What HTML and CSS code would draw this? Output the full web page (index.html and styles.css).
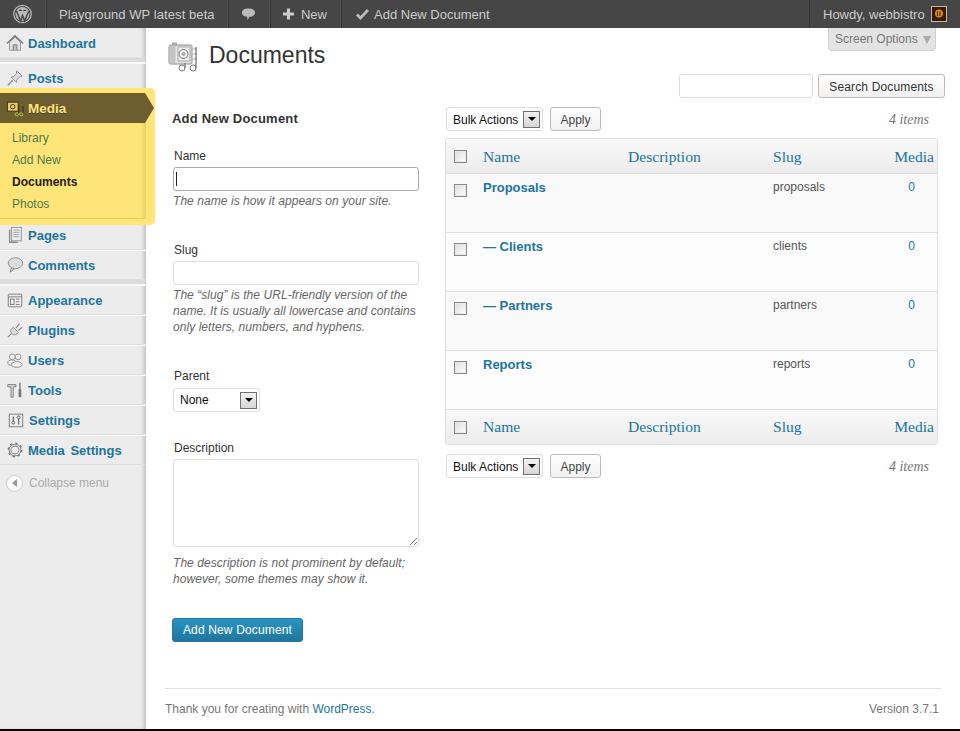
FILE: index.html
```html
<!DOCTYPE html>
<html lang="en">
<head>
  <meta charset="UTF-8">
  <title>Documents</title>
  <link rel="stylesheet" href="styles.css">
</head>
<body>
  <header class="adminbar">
    <div class="bar-item bar-wp">
      <svg width="20" height="20" viewBox="0 0 20 20"><circle cx="10" cy="10" r="9.2" fill="none" stroke="#bbb" stroke-width="1.3"/><circle cx="10" cy="10" r="7.4" fill="#bbb"/><path d="M3.5 6.5 L8 17.5 L10 11.5 L12.3 17.5 L16.5 7 M6 6.2 H9.5 M10.8 6.2 H14" fill="none" stroke="#464646" stroke-width="1.5"/></svg>
    </div>
    <div class="bar-item bar-site">Playground WP latest beta</div>
    <div class="bar-item bar-comments">
      <svg width="16" height="16" viewBox="0 0 16 16"><path d="M1 6.5 C1 3.5 4 2 8 2 C12 2 15 3.5 15 6.5 C15 9.5 12 11 9 11 L7 14.5 L6.5 11 C3.5 10.8 1 9.5 1 6.5 Z" fill="#bbb"/></svg>
    </div>
    <div class="bar-item bar-new">
      <svg width="12" height="12" viewBox="0 0 12 12"><path d="M6 0V12M0 6H12" stroke="#ccc" stroke-width="3.4"/></svg>
      New
    </div>
    <div class="bar-item bar-add">
      <svg width="13" height="12" viewBox="0 0 13 12"><path d="M1 6.5 L4.5 10 L12 2" fill="none" stroke="#bbb" stroke-width="2.8"/></svg>
      Add New Document
    </div>
    <div class="bar-item bar-user">Howdy, webbistro <span class="avatar"><svg width="14" height="14" viewBox="0 0 14 14"><rect width="14" height="14" fill="#3a1a02"/><circle cx="7" cy="6.500" r="4" fill="#d98a12"/><path d="M5.500 4.500V9M8 4.500V9" stroke="#3a1a02"/></svg></span></div>
  </header>

  <div class="page">
    <nav class="sidebar">
      <a class="menu-item first"><svg class="ico" viewBox="0 0 20 20"><path d="M4 9 V18 H16 V9 L10 3.500 Z" fill="#e4e4e4" stroke="#8a8a8a"/><path d="M1 10.500 L10 2 L19 10.500" fill="none" stroke="#777" stroke-width="1.500"/><path d="M8 18 V12 H12 V18" fill="#bbb" stroke="#777"/></svg>Dashboard</a>
      <div class="menu-sep"></div>
      <a class="menu-item"><svg class="ico" viewBox="0 0 20 20"><path d="M12 2 L18 8 L15.500 8.500 L12 12 L11.500 15 L5.500 9 L8.500 8.500 L11.500 5 Z" fill="#ddd" stroke="#8a8a8a"/><path d="M7.500 12.500 L2 18" stroke="#8a8a8a" stroke-width="1.400"/></svg>Posts</a>
      <div class="media-block">
        <a class="menu-item media-current"><svg class="ico" viewBox="0 0 20 20"><rect x="1.500" y="3.500" width="12" height="10" fill="#e8c970" stroke="#332a0c"/><circle cx="7.500" cy="8.500" r="2.500" fill="none" stroke="#332a0c"/><circle cx="12" cy="17" r="1.800" fill="none" stroke="#b9d14a"/><circle cx="17" cy="17" r="1.800" fill="none" stroke="#b9d14a"/><path d="M14 16V8M19 16V8" stroke="#332a0c"/></svg>Media</a>
        <ul class="submenu">
          <li>Library</li>
          <li>Add New</li>
          <li class="current">Documents</li>
          <li>Photos</li>
        </ul>
      </div>
      <a class="menu-item"><svg class="ico" viewBox="0 0 20 20"><rect x="6" y="1.500" width="11" height="15" fill="#eee" stroke="#8a8a8a"/><path d="M8 4.500H15M8 7H15M8 9.500H15M8 12H15" stroke="#999"/><path d="M4 4V18H13" fill="none" stroke="#8a8a8a" stroke-width="1.500"/></svg>Pages</a>
      <a class="menu-item"><svg class="ico" viewBox="0 0 20 20"><path d="M6 13 L4.500 18 L10 14" fill="#ccc" stroke="#8a8a8a"/><ellipse cx="10.500" cy="8" rx="8" ry="6" fill="#ddd" stroke="#8a8a8a"/></svg>Comments</a>
      <div class="menu-sep"></div>
      <a class="menu-item"><svg class="ico" viewBox="0 0 20 20"><rect x="2.500" y="3.500" width="15" height="14" rx="1" fill="#eee" stroke="#777"/><path d="M3 6.500H17" stroke="#777"/><rect x="5" y="9" width="4" height="6" fill="none" stroke="#777"/><path d="M11 9H15M11 12H15M11 15H15" stroke="#777"/></svg>Appearance</a>
      <a class="menu-item"><svg class="ico" viewBox="0 0 20 20"><path d="M8 7 L14 13 L11 15 C9 16 7 15 6 13.500 C5 12 5 10.500 6 9 Z" fill="#ddd" stroke="#8a8a8a"/><path d="M11 8 L15 3 M13.500 10.500 L18 7 M6 14 L2 18" stroke="#8a8a8a" stroke-width="1.300"/></svg>Plugins</a>
      <a class="menu-item"><svg class="ico" viewBox="0 0 20 20"><circle cx="7" cy="6.500" r="3.200" fill="#eee" stroke="#8a8a8a"/><circle cx="13.500" cy="6.500" r="3.200" fill="#eee" stroke="#8a8a8a"/><ellipse cx="6.500" cy="13" rx="4.500" ry="3" fill="#eee" stroke="#8a8a8a"/><ellipse cx="12" cy="15" rx="6" ry="3.200" fill="#eee" stroke="#8a8a8a"/></svg>Users</a>
      <a class="menu-item"><svg class="ico" viewBox="0 0 20 20"><path d="M2 4H11V6.500H8V18H5.500V6.500H2Z" fill="#ddd" stroke="#777"/><rect x="14" y="9" width="3" height="9" rx="1" fill="#777"/><path d="M15.500 2V9" stroke="#777" stroke-width="1.500"/></svg>Tools</a>
      <a class="menu-item settings"><svg class="ico" viewBox="0 0 20 20"><rect x="2.500" y="3.500" width="15" height="14" fill="#eee" stroke="#777"/><path d="M7 6V11M13 9V15" stroke="#555" stroke-width="1.200"/><circle cx="7" cy="13" r="1.600" fill="none" stroke="#555"/><circle cx="13" cy="7" r="1.600" fill="none" stroke="#555"/></svg>Settings</a>
      <a class="menu-item wide"><svg class="ico" viewBox="0 0 20 20"><circle cx="10" cy="10" r="5.500" fill="none" stroke="#777" stroke-width="3"/><circle cx="10" cy="10" r="7.500" fill="none" stroke="#777" stroke-width="1.500" stroke-dasharray="2.600 3.300"/><circle cx="10" cy="10" r="5.500" fill="none" stroke="#ececec" stroke-width="1.200"/></svg>Media Settings</a>
      <div class="collapse"><span class="collapse-btn"><i></i></span>Collapse menu</div>
    </nav>

    <main class="content">
      <div class="screen-tab">Screen Options <i></i></div>
      <div class="title-row">
        <svg class="title-ico" width="32" height="32" viewBox="0 0 32 32"><path d="M25 9H29M25 14H29M25 19H29" stroke="#aaa"/><rect x="1" y="5" width="23" height="19" rx="1.500" fill="#e4e4e4" stroke="#8a8a8a"/><rect x="4" y="2.500" width="5" height="3" fill="#aaa"/><rect x="1.500" y="5.500" width="6" height="18" fill="#c4c4c4"/><rect x="10" y="7" width="12" height="14" fill="#eee" stroke="#aaa"/><circle cx="15.500" cy="14" r="4.500" fill="#f4f4f4" stroke="#777"/><circle cx="15.500" cy="14" r="2" fill="#aaa"/><circle cx="14" cy="28" r="3" fill="#fff" stroke="#777"/><circle cx="25" cy="28" r="3" fill="#fff" stroke="#777"/><path d="M17 28V23M28 28V7" stroke="#777" stroke-width="1.300"/></svg>
        <h1>Documents</h1>
      </div>
      <div class="search-row">
        <input class="field search-input" type="text">
        <button class="btn search-btn">Search Documents</button>
      </div>
      <div class="columns">
        <section class="col-form">
          <h3>Add New Document</h3>
          <div class="form-field name-field">
            <label>Name</label>
            <div class="field focus"><span class="caret"></span></div>
            <p>The name is how it appears on your site.</p>
          </div>
          <div class="form-field slug-field">
            <label>Slug</label>
            <div class="field"></div>
            <p>The “slug” is the URL-friendly version of the name. It is usually all lowercase and contains only letters, numbers, and hyphens.</p>
          </div>
          <div class="form-field parent-field">
            <label>Parent</label>
            <div class="select parent-select">None<span class="arrow"></span></div>
          </div>
          <div class="form-field desc-field">
            <label>Description</label>
            <div class="field area"><svg class="grip" width="9" height="9" viewBox="0 0 9 9"><path d="M1 8L8 1M5 8L8 5" stroke="#777"/></svg></div>
            <p>The description is not prominent by default; however, some themes may show it.</p>
          </div>
          <button class="btn-primary">Add New Document</button>
        </section>

        <section class="col-table">
          <div class="tablenav">
            <div class="select bulk">Bulk Actions<span class="arrow"></span></div>
            <button class="btn apply">Apply</button>
            <span class="count">4 items</span>
          </div>
          <div class="table">
            <div class="row head">
              <span class="check"></span><span class="c-name">Name</span><span class="c-desc">Description</span><span class="c-slug">Slug</span><span class="c-media">Media</span>
            </div>
            <div class="row body alt">
              <span class="check"></span><span class="c-name term">Proposals</span><span class="c-desc"></span><span class="c-slug">proposals</span><span class="c-media num">0</span>
            </div>
            <div class="row body">
              <span class="check"></span><span class="c-name term">— Clients</span><span class="c-desc"></span><span class="c-slug">clients</span><span class="c-media num">0</span>
            </div>
            <div class="row body alt">
              <span class="check"></span><span class="c-name term">— Partners</span><span class="c-desc"></span><span class="c-slug">partners</span><span class="c-media num">0</span>
            </div>
            <div class="row body">
              <span class="check"></span><span class="c-name term">Reports</span><span class="c-desc"></span><span class="c-slug">reports</span><span class="c-media num">0</span>
            </div>
            <div class="row head foot">
              <span class="check"></span><span class="c-name">Name</span><span class="c-desc">Description</span><span class="c-slug">Slug</span><span class="c-media">Media</span>
            </div>
          </div>
          <div class="tablenav bottom">
            <div class="select bulk">Bulk Actions<span class="arrow"></span></div>
            <button class="btn apply">Apply</button>
            <span class="count">4 items</span>
          </div>
        </section>
      </div>

      <footer class="footer">
        <span>Thank you for creating with <a>WordPress</a>.</span>
        <span>Version 3.7.1</span>
      </footer>
    </main>
  </div>
</body>
</html>
```

FILE: styles.css
```css
* {
  box-sizing: border-box;
}

html {
  height: 731px;
  background: #000;
}

body {
  margin: 0;
  height: 729px;
  overflow: hidden;
  font-family: "Liberation Sans", Arial, sans-serif;
  font-size: 12px;
  color: #333;
  background: #fff;
}

.adminbar {
  display: flex;
  height: 28px;
  background: #464646;
  color: #ccc;
  font-size: 13px;
  white-space: nowrap;
}

.bar-item {
  display: flex;
  align-items: center;
  padding: 0 13px;
  border-right: 1px solid #555;
  box-shadow: 1px 0 0 #333;
}

.bar-wp {
  width: 46px;
}

.bar-site {
  width: 182px;
  letter-spacing: .08px;
}

.bar-comments {
  width: 42px;
}

.bar-new {
  width: 71px;
  gap: 7px;
}

.bar-add {
  flex: 1;
  gap: 5px;
  padding-left: 15px;
  border-right: 0;
  box-shadow: none;
}

.bar-user {
  width: 151px;
  gap: 6px;
  border-right: 0;
  box-shadow: none;
  border-left: 1px solid #333;
}

.avatar {
  display: flex;
  padding: 1px;
  background: #bbb;
}

.page {
  display: flex;
  height: 701px;
}

.sidebar {
  position: relative;
  width: 146px;
  flex: none;
  background: #ececec;
  box-shadow: inset -4px 0 4px -2px #bbb;
}

.menu-item {
  display: flex;
  align-items: center;
  height: 30px;
  padding-left: 6px;
  font-size: 13px;
  font-weight: bold;
  color: #21759b;
  border-top: 1px solid #f9f9f9;
  border-bottom: 1px solid #dfdfdf;
}

.menu-item.first {
  padding-top: 1px;
  border-top: 0;
}

.menu-item.settings {
  padding-left: 7px;
}

.wide {
  word-spacing: 2px;
}

.ico {
  width: 18px;
  height: 18px;
  margin-right: 4px;
  flex: none;
}

.menu-sep {
  height: 5px;
  width: 145px;
  background: #dcdcdc;
  border-bottom: 1px solid #f9f9f9;
}

.media-block {
  position: relative;
  z-index: 2;
  width: 155px;
  margin: -5px 0;
  padding: 5px 0 6px;
  background: #ffe477;
  border-radius: 0 5px 5px 0;
}

.media-current {
  position: relative;
  width: 145px;
  background: #6e5d2f;
  color: #ffe477;
  border: 0;
  font-size: 13.5px;
  text-shadow: 0 1px 0 #443;
}

.media-current::after {
  content: "";
  position: absolute;
  left: 145px;
  top: 0;
  border-style: solid;
  border-width: 15px 0 15px 9px;
  border-color: transparent transparent transparent #6e5d2f;
}

.submenu {
  list-style: none;
  margin: 0;
  padding: 4px 0 3px;
  width: 146px;
  border-bottom: 1px solid #e8cf66;
  box-shadow: inset -4px 0 4px -2px #e5cc66;
}

.submenu li {
  height: 22px;
  line-height: 22px;
  padding-left: 12px;
  color: #4a7a50;
}

.submenu .current {
  color: #222;
  font-weight: bold;
}

.collapse {
  display: flex;
  align-items: center;
  gap: 6px;
  height: 36px;
  padding-left: 6px;
  color: #aaa;
}

.collapse-btn {
  display: flex;
  align-items: center;
  justify-content: center;
  width: 17px;
  height: 17px;
  border-radius: 50%;
  background: #fafafa;
  border: 1px solid #ccc;
}

.collapse-btn i {
  border-style: solid;
  border-width: 4px 5px 4px 0;
  border-color: transparent #999 transparent transparent;
}

.content {
  position: relative;
  flex: 1;
  padding: 0 19px;
}

.screen-tab {
  position: absolute;
  top: 0;
  right: 24px;
  display: flex;
  align-items: center;
  justify-content: space-between;
  width: 108px;
  height: 23px;
  padding: 0 4px 0 6px;
  color: #777;
  background: #e3e3e3;
  border: 1px solid #d1d1d1;
  border-top: 0;
  border-radius: 0 0 4px 4px;
}

.screen-tab i {
  margin-top: 1px;
  border-style: solid;
  border-width: 8px 4px 0;
  border-color: #aaa transparent transparent;
}

.title-row {
  display: flex;
  align-items: center;
  height: 46px;
  margin-top: 4px;
  padding-left: 3px;
  gap: 9px;
}

.title-ico {
  margin-top: 2px;
}

h1 {
  margin: 0;
  font-size: 23px;
  font-weight: normal;
  color: #333;
}

.search-row {
  display: flex;
  justify-content: flex-end;
  gap: 5px;
  height: 24px;
  margin-top: -4px;
  margin-right: -4px;
}

.field {
  display: block;
  height: 24px;
  background: #fff;
  border: 1px solid #ddd;
  border-radius: 3px;
}

.search-input {
  width: 134px;
}

.btn {
  height: 24px;
  padding: 1px 10px 0;
  font: 12px "Liberation Sans", Arial, sans-serif;
  color: #333;
  background: linear-gradient(#fefefe, #f1f1f1);
  border: 1px solid #bbb;
  border-radius: 3px;
}

.search-btn {
  width: 127px;
  padding: 1px 0 0;
  letter-spacing: .15px;
}

.columns {
  display: flex;
  gap: 27px;
  margin-top: 7px;
  padding-left: 7px;
  height: 583px;
}

.col-form {
  width: 247px;
  flex: none;
}

h3 {
  margin: 0;
  padding-top: 6px;
  font-size: 13px;
  line-height: 16px;
  letter-spacing: .2px;
  color: #333;
}

.form-field label {
  display: block;
  padding-left: 2px;
  line-height: 16px;
  color: #333;
}

.form-field .field {
  width: 246px;
  margin: 3px 0 0 1px;
}

.form-field p {
  margin: 2px 0 0 1px;
  font-style: italic;
  line-height: 16px;
  letter-spacing: .06px;
  color: #666;
}

.name-field {
  margin-top: 21px;
}

.name-field .field {
  border-color: #aaa;
  padding: 4px 2px;
}

.caret {
  display: block;
  width: 1px;
  height: 14px;
  background: #222;
}

.slug-field {
  margin-top: 33px;
}

.parent-field {
  margin-top: 33px;
}

.desc-field {
  margin-top: 28px;
}

.desc-field p {
  margin-top: 8px;
}

.form-field .area {
  position: relative;
  height: 88px;
}

.grip {
  position: absolute;
  right: 0;
  bottom: 0;
}

.select {
  display: flex;
  align-items: center;
  justify-content: space-between;
  height: 24px;
  padding: 0 2px 0 6px;
  font-size: 12px;
  color: #111;
  background: #fff;
  border: 1px solid #ddd;
  border-radius: 3px;
}

.form-field .select {
  margin: 4px 0 0 1px;
}

.parent-select {
  width: 87px;
}

.bulk {
  width: 97px;
  padding-top: 1px;
}

.bulk .arrow {
  margin-top: -1px;
}

.arrow {
  display: flex;
  align-items: center;
  justify-content: center;
  width: 17px;
  height: 17px;
  background: linear-gradient(#f2f2f2, #d6d6d6);
  border: 1px solid #707070;
}

.arrow::before {
  content: "";
  border-style: solid;
  border-width: 4px 4px 0;
  border-color: #000 transparent transparent;
}

.btn-primary {
  display: block;
  height: 24px;
  width: 131px;
  margin-top: 31px;
  padding: 0;
  font: 12px "Liberation Sans", Arial, sans-serif;
  letter-spacing: .15px;
  color: #fff;
  background: linear-gradient(#2a95c5, #21759b);
  border: 1px solid #21759b;
  border-radius: 3px;
}

.col-table {
  width: 492px;
  flex: none;
}

.tablenav {
  display: flex;
  align-items: center;
  gap: 7px;
  height: 24px;
  margin-bottom: 7px;
  margin-top: 2px;
}

.tablenav.bottom {
  margin-top: 9px;
}

.apply {
  width: 51px;
  padding: 1px 0 0;
  color: #444;
}

.count {
  margin-left: auto;
  padding: 1px 9px 0 0;
  font-family: "Liberation Serif", serif;
  font-style: italic;
  font-size: 14px;
  color: #777;
}

.table {
  width: 493px;
  margin-left: -1px;
  background: #fff;
  border: 1px solid #dfdfdf;
  border-radius: 3px;
  overflow: hidden;
}

.row {
  display: grid;
  grid-template-columns: 29px 145px 145px 118px 1fr;
  padding-left: 8px;
  border-bottom: 1px solid #dfdfdf;
}

.head {
  height: 35px;
  padding-top: 1px;
  align-items: center;
  font-family: "Liberation Serif", serif;
  font-size: 15.6px;
  color: #21759b;
  background: linear-gradient(#f9f9f9, #ececec);
}

.foot {
  height: 34px;
  padding-top: 0;
  border-bottom: 0;
}

.body {
  height: 59px;
  padding-top: 6px;
  background: #fcfcfc;
  color: #555;
}

.alt {
  background: #f9f9f9;
}

.term {
  font-size: 13px;
  font-weight: bold;
  color: #21759b;
}

.check {
  display: block;
  width: 13px;
  height: 13px;
  background: linear-gradient(135deg, #ddd, #fff);
  border: 1px solid #8a8a8a;
  outline: 1px solid #e8e8e8;
  outline-offset: -2px;
}

.body .check {
  margin-top: 4px;
}

.c-media {
  text-align: right;
  padding-right: 3px;
}

.num {
  color: #21759b;
  padding-right: 22px;
}

.footer {
  display: flex;
  justify-content: space-between;
  height: 40px;
  padding: 13px 2px 0 0;
  border-top: 1px solid #dfdfdf;
  color: #777;
}

.footer a {
  color: #21759b;
}
```
